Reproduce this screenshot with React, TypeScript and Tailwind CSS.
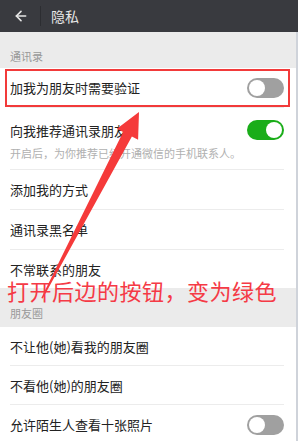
import { ArrowLeft } from "lucide-react";

const font = { fontFamily: '"Noto Sans CJK SC", "Noto Sans", sans-serif' };

const Toggle = ({ on }: { on?: boolean }) => (
  <div
    className={`flex h-[20px] w-[37px] items-center rounded-full p-[2px] ${
      on ? "justify-end bg-[#1aad19]" : "justify-start bg-[#a0a0a0]"
    }`}
  >
    <div className="h-[16px] w-[16px] rounded-full bg-white" />
  </div>
);

const Row = ({
  label,
  toggle,
  on,
  divider = true,
  h = "h-[40px]",
}: {
  label: string;
  toggle?: boolean;
  on?: boolean;
  divider?: boolean;
  h?: string;
}) => (
  <div className="bg-white pl-[10px] pr-[14px]">
    <div className={`flex ${h} items-center justify-between ${divider ? "border-b border-[#ececec]" : ""}`}>
      <span className="text-[13px] leading-none text-[#222]">{label}</span>
      {toggle && <Toggle on={on} />}
    </div>
  </div>
);

export default function App() {
  return (
    <div className="relative h-[441px] w-[298px] overflow-hidden bg-white" style={font}>
      <div className="flex h-[32px] items-center bg-[#393a3f] text-[#e6e6e6]">
        <div className="flex w-[40px] justify-center pl-[2px]">
          <ArrowLeft size={16} strokeWidth={2.4} />
        </div>
        <div className="h-[20px] w-px bg-[#2c2d31]" />
        <span className="pl-[10px] text-[14px]">隐私</span>
      </div>

      <div className="flex h-[36px] items-end bg-[#ebebeb] pb-[6px] pl-[10px]">
        <span className="text-[11px] leading-none text-[#999]">通讯录</span>
      </div>
      <Row label="加我为朋友时需要验证" toggle />

      <div className="bg-white pl-[10px] pr-[14px]">
        <div className="border-b border-[#ececec] pb-[10px] pt-[12px]">
          <div className="flex items-center justify-between">
            <span className="text-[13px] leading-none text-[#222]">向我推荐通讯录朋友</span>
            <Toggle on />
          </div>
          <div className="mt-[8px] text-[11px] leading-none text-[#b0b0b0]">
            开启后，为你推荐已经开通微信的手机联系人。
          </div>
        </div>
      </div>

      <Row label="添加我的方式" />
      <Row label="通讯录黑名单" />
      <Row label="不常联系的朋友" divider={false} h="h-[38px]" />

      <div className="flex h-[39px] items-end bg-[#ebebeb] pb-[8px] pl-[10px]">
        <span className="text-[11px] leading-none text-[#999]">朋友圈</span>
      </div>
      <Row label="不让他(她)看我的朋友圈" h="h-[39px]" />
      <Row label="不看他(她)的朋友圈" h="h-[39px]" />
      <Row label="允许陌生人查看十张照片" toggle divider={false} h="h-[39px]" />

      <div className="absolute right-0 top-[32px] h-[409px] w-[2px] bg-[#cfd3da]" />

      <div className="absolute left-[5px] top-[69px] h-[38px] w-[285px] border-2 border-[#f23a3a]" />

      <svg className="absolute left-0 top-0" width="298" height="441">
        <polygon
          points="139,112 116.9,128.7 123.1,131.9 41.3,298 42.7,298.6 131.9,136.5 138.1,139.7"
          fill="#f53a3a"
        />
      </svg>

      <div className="absolute left-[7px] top-[279px] text-[22px] leading-none tracking-[0.5px] text-[#f53a46]">
        打开后边的按钮，变为绿色
      </div>
    </div>
  );
}
